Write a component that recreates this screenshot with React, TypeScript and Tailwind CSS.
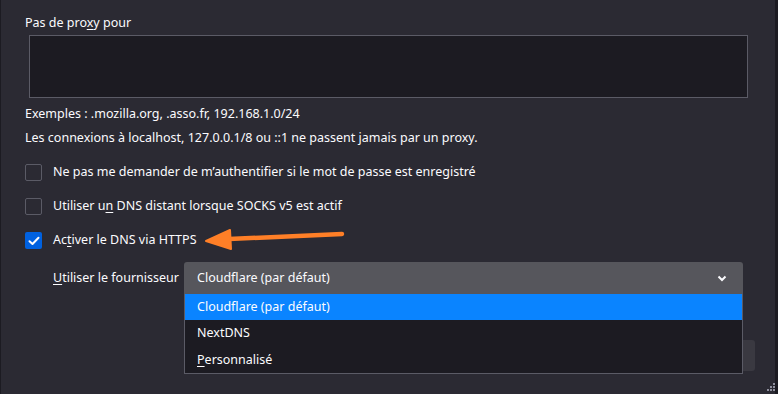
import React from "react";

function Box({ checked }: { checked?: boolean }) {
  if (checked) {
    return (
      <div className="w-[17px] h-[17px] rounded-[2px] bg-[#0061e0] flex items-center justify-center shrink-0">
        <svg width="12" height="10" viewBox="0 0 12 10">
          <path d="M1.5 5.2 L4.5 8 L10.5 1.8" stroke="#fbfbfe" strokeWidth="2" fill="none" strokeLinecap="round" strokeLinejoin="round" />
        </svg>
      </div>
    );
  }
  return <div className="w-[17px] h-[17px] rounded-[2px] border border-[#5b5b66] bg-[#2b2a33] shrink-0" />;
}

export default function App() {
  return (
    <div
      className="relative w-[778px] h-[394px] overflow-hidden bg-[#2b2a33] text-[#fbfbfe] text-[12.5px] border-l border-[#1c1b22]"
      style={{ fontFamily: '"Noto Sans", "Open Sans", sans-serif' }}
    >
      <div className="absolute right-0 top-0 w-[3px] h-full bg-[#1c1b22]" />
      <div className="flex flex-col pl-[24px] pt-[14px] pr-[30px]">
        <div className="leading-[18px]">
          Pas de pro<span className="underline underline-offset-2">x</span>y pour
        </div>
        <div className="ml-[4px] mt-[3px] w-[719px] h-[63px] bg-[#1c1b22] border border-[#5b5b66]" />
        <div className="leading-[18px] mt-[7px]">Exemples : .mozilla.org, .asso.fr, 192.168.1.0/24</div>
        <div className="leading-[18px] mt-[6px]">
          Les connexions à localhost, 127.0.0.1/8 ou ::1 ne passent jamais par un proxy.
        </div>
        <div className="flex flex-col gap-[17px] mt-[17px]">
          <div className="flex items-center gap-[11px] h-[17px]">
            <Box />
            <span>Ne pas me demander de m’authentifier si le mot de passe est enregistré</span>
          </div>
          <div className="flex items-center gap-[11px] h-[17px]">
            <Box />
            <span>
              Utiliser u<span className="underline underline-offset-2">n</span> DNS distant lorsque SOCKS v5 est actif
            </span>
          </div>
          <div className="flex items-center gap-[11px] h-[17px]">
            <Box checked />
            <span>
              Ac<span className="underline underline-offset-2">t</span>iver le DNS via HTTPS
            </span>
          </div>
        </div>
        <div className="flex items-center mt-[13px] ml-[28px]">
          <span className="w-[131px]">
            <span className="underline underline-offset-2">U</span>tiliser le fournisseur
          </span>
          <div className="relative w-[559px] h-[32px] bg-[#56565c] rounded-t-[3px] flex items-center justify-between pl-[13px] pr-[16px]">
            <span>Cloudflare (par défaut)</span>
            <svg width="10" height="7" viewBox="0 0 10 7">
              <path d="M1.5 1.5 L5 5 L8.5 1.5" stroke="#fbfbfe" strokeWidth="2" fill="none" />
            </svg>
            <div className="absolute left-0 top-[32px] w-[559px] bg-[#1c1b22] border-l border-r border-b border-[#5b5b66] flex flex-col z-10">
              <div className="h-[26px] bg-[#0a84ff] flex items-center pl-[12px]">Cloudflare (par défaut)</div>
              <div className="h-[27px] flex items-center pl-[12px]">NextDNS</div>
              <div className="h-[26px] flex items-center pl-[12px]">
                <span className="underline underline-offset-2">P</span>ersonnalisé
              </div>
            </div>
          </div>
        </div>
        <div className="flex justify-end mt-[46px] mr-[-7px]">
          <div className="w-[60px] h-[31px] bg-[#3a3941] rounded-[3px]" />
        </div>
      </div>
      <svg className="absolute left-0 top-0" width="778" height="394" viewBox="0 0 778 394">
        <path d="M341 234 L228 239" stroke="#ff7f27" strokeWidth="4.5" strokeLinecap="round" fill="none" />
        <path d="M205 241 L229 230 L230 249 Z" fill="#ff7f27" stroke="#ff7f27" strokeWidth="2" strokeLinejoin="round" />
      </svg>
      <svg className="absolute right-[2px] bottom-[2px]" width="10" height="10" viewBox="0 0 10 10">
        <rect x="7" y="1" width="2" height="2" fill="#8f8f9d" />
        <rect x="4" y="4" width="2" height="2" fill="#8f8f9d" />
        <rect x="7" y="4" width="2" height="2" fill="#8f8f9d" />
        <rect x="1" y="7" width="2" height="2" fill="#8f8f9d" />
        <rect x="4" y="7" width="2" height="2" fill="#8f8f9d" />
        <rect x="7" y="7" width="2" height="2" fill="#8f8f9d" />
      </svg>
    </div>
  );
}
